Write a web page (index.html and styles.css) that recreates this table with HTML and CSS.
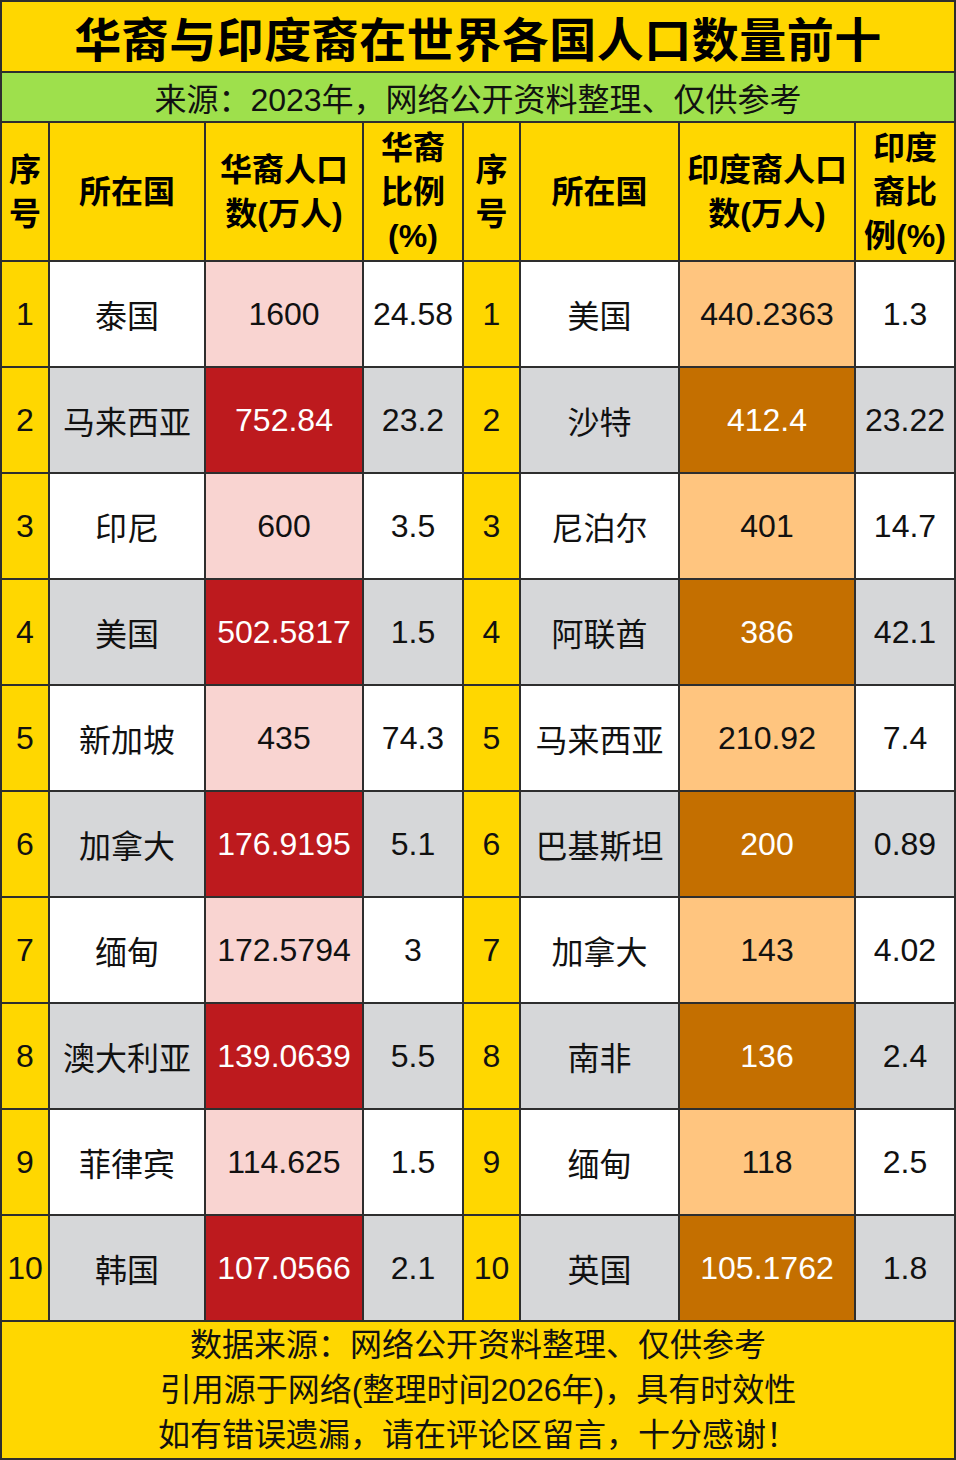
FILE: index.html
```html
<!DOCTYPE html>
<html lang="zh-CN">
<head>
<meta charset="utf-8">
<title>华裔与印度裔在世界各国人口数量前十</title>
<link rel="stylesheet" href="styles.css">
</head>
<body>
<div class="table">
  <div class="title span">华裔与印度裔在世界各国人口数量前十</div>
  <div class="subtitle span">来源：2023年，网络公开资料整理、仅供参考</div>

  <div class="head">序号</div>
  <div class="head">所在国</div>
  <div class="head">华裔人口数(万人)</div>
  <div class="head">华裔比例(%)</div>
  <div class="head">序号</div>
  <div class="head">所在国</div>
  <div class="head">印度裔人口数(万人)</div>
  <div class="head">印度裔比例(%)</div>

  <div class="idx">1</div><div class="c odd">泰国</div><div class="c cn-odd">1600</div><div class="c odd">24.58</div>
  <div class="idx">1</div><div class="c odd">美国</div><div class="c in-odd">440.2363</div><div class="c odd">1.3</div>

  <div class="idx">2</div><div class="c even">马来西亚</div><div class="c cn-even">752.84</div><div class="c even">23.2</div>
  <div class="idx">2</div><div class="c even">沙特</div><div class="c in-even">412.4</div><div class="c even">23.22</div>

  <div class="idx">3</div><div class="c odd">印尼</div><div class="c cn-odd">600</div><div class="c odd">3.5</div>
  <div class="idx">3</div><div class="c odd">尼泊尔</div><div class="c in-odd">401</div><div class="c odd">14.7</div>

  <div class="idx">4</div><div class="c even">美国</div><div class="c cn-even">502.5817</div><div class="c even">1.5</div>
  <div class="idx">4</div><div class="c even">阿联酋</div><div class="c in-even">386</div><div class="c even">42.1</div>

  <div class="idx">5</div><div class="c odd">新加坡</div><div class="c cn-odd">435</div><div class="c odd">74.3</div>
  <div class="idx">5</div><div class="c odd">马来西亚</div><div class="c in-odd">210.92</div><div class="c odd">7.4</div>

  <div class="idx">6</div><div class="c even">加拿大</div><div class="c cn-even">176.9195</div><div class="c even">5.1</div>
  <div class="idx">6</div><div class="c even">巴基斯坦</div><div class="c in-even">200</div><div class="c even">0.89</div>

  <div class="idx">7</div><div class="c odd">缅甸</div><div class="c cn-odd">172.5794</div><div class="c odd">3</div>
  <div class="idx">7</div><div class="c odd">加拿大</div><div class="c in-odd">143</div><div class="c odd">4.02</div>

  <div class="idx">8</div><div class="c even">澳大利亚</div><div class="c cn-even">139.0639</div><div class="c even">5.5</div>
  <div class="idx">8</div><div class="c even">南非</div><div class="c in-even">136</div><div class="c even">2.4</div>

  <div class="idx">9</div><div class="c odd">菲律宾</div><div class="c cn-odd">114.625</div><div class="c odd">1.5</div>
  <div class="idx">9</div><div class="c odd">缅甸</div><div class="c in-odd">118</div><div class="c odd">2.5</div>

  <div class="idx">10</div><div class="c even">韩国</div><div class="c cn-even">107.0566</div><div class="c even">2.1</div>
  <div class="idx">10</div><div class="c even">英国</div><div class="c in-even">105.1762</div><div class="c even">1.8</div>

  <div class="footer span">
    <div>数据来源：网络公开资料整理、仅供参考</div>
    <div>引用源于网络(整理时间2026年)，具有时效性</div>
    <div>如有错误遗漏，请在评论区留言，十分感谢！</div>
  </div>
</div>
</body>
</html>
```

FILE: styles.css
```css
html, body {
  margin: 0;
  padding: 0;
  background: #ffffff;
}

body {
  font-family: "Liberation Sans", "Noto Sans CJK SC", sans-serif;
  color: #111111;
}

.table {
  width: 956px;
  height: 1460px;
  box-sizing: border-box;
  display: grid;
  grid-template-columns: 46px 154px 156px 98px 55px 157px 174px 98px;
  grid-template-rows: 69px 48px 137px repeat(10, 104px) 136px;
  gap: 2px;
  padding: 2px;
  background: #2e2e2e;
}

.span {
  grid-column: 1 / -1;
}

.title {
  background: #ffd700;
  font-size: 47px;
  font-weight: 700;
  color: #000;
  display: flex;
  align-items: center;
  justify-content: center;
  letter-spacing: 0.5px;
}

.subtitle {
  background: #9ee04c;
  font-size: 32px;
  display: flex;
  align-items: center;
  justify-content: center;
  color: #111;
}

.head {
  background: #ffd700;
  font-size: 32px;
  font-weight: 700;
  line-height: 44px;
  display: flex;
  align-items: center;
  justify-content: center;
  text-align: center;
  padding: 0 6px;
  color: #000;
}

.head:nth-child(3),
.head:nth-child(7) {
  padding: 0;
}

.idx,
.c {
  font-size: 32px;
  display: flex;
  align-items: center;
  justify-content: center;
  text-align: center;
  white-space: nowrap;
}

.idx {
  background: #ffd700;
}

.odd {
  background: #ffffff;
}

.even {
  background: #d6d7d9;
}

.cn-odd {
  background: #f9d4d1;
}

.cn-even {
  background: #bd1a1e;
  color: #ffffff;
}

.in-odd {
  background: #ffc57f;
}

.in-even {
  background: #c46f00;
  color: #ffffff;
}

.footer {
  background: #ffd700;
  font-size: 32px;
  line-height: 45px;
  display: flex;
  flex-direction: column;
  align-items: center;
  justify-content: center;
  text-align: center;
  color: #111;
}
```
